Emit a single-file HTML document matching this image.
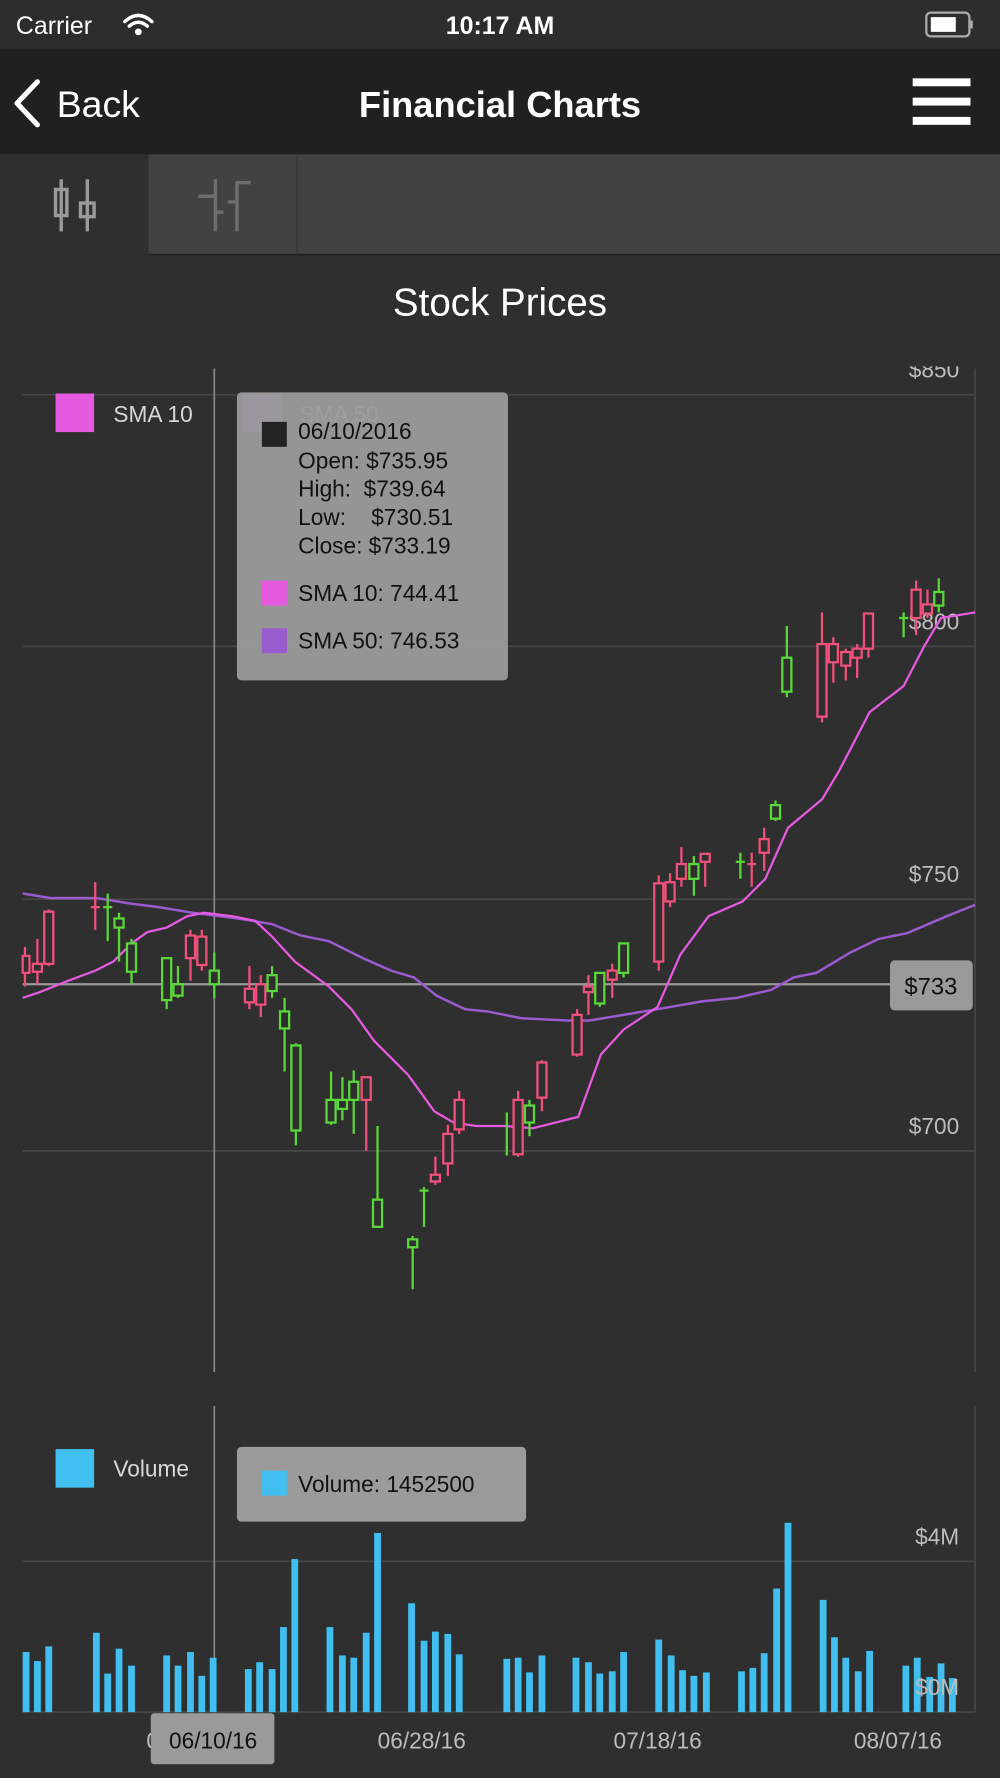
<!DOCTYPE html>
<html><head><meta charset="utf-8"><style>
html,body{margin:0;padding:0;background:#2f2f2f;}
svg{display:block;}
text{font-family:"Liberation Sans",sans-serif;}
</style></head><body>
<svg width="1000" height="1778" viewBox="0 0 882 1568" xmlns="http://www.w3.org/2000/svg">
<defs><clipPath id="cp"><rect x="0" y="323" width="882" height="900"/></clipPath></defs>
<rect x="0" y="0" width="882" height="1568" fill="#2f2f2f"/>
<rect x="0" y="0" width="882" height="43" fill="#2d2d2d"/>
<text x="14" y="30" font-size="22" fill="#fff">Carrier</text>
<g fill="none" stroke="#fff" stroke-width="3" stroke-linecap="round">
<path d="M110 19 Q122 8 134 19"/><path d="M114 23 Q122 16 130 23"/>
</g>
<circle cx="122" cy="28" r="3" fill="#fff"/>
<text x="441" y="30" font-size="22" fill="#fff" text-anchor="middle" font-weight="bold">10:17 AM</text>
<rect x="817" y="11" width="38" height="21" rx="4" fill="none" stroke="#aaa" stroke-width="2"/>
<rect x="821" y="15" width="22" height="13" fill="#fff"/>
<rect x="856" y="18" width="2" height="7" fill="#aaa"/>
<rect x="0" y="43" width="882" height="93" fill="#202020"/>
<path d="M33 72 L15 91 L33 110" fill="none" stroke="#fff" stroke-width="4.5" stroke-linecap="round" stroke-linejoin="round"/>
<text x="50" y="103" font-size="33" fill="#fff">Back</text>
<text x="441" y="103" font-size="32" fill="#fff" text-anchor="middle" font-weight="bold">Financial Charts</text>
<rect x="805" y="69" width="51" height="7" fill="#fff"/>
<rect x="805" y="86" width="51" height="7" fill="#fff"/>
<rect x="805" y="103" width="51" height="7" fill="#fff"/>
<rect x="131" y="136" width="751" height="88" fill="#424242"/>
<line x1="262" y1="136" x2="262" y2="224" stroke="#333" stroke-width="1"/>
<line x1="131" y1="224.5" x2="882" y2="224.5" stroke="#222" stroke-width="1.5"/>
<g stroke="#9a9a9a" stroke-width="3" fill="none">
<line x1="54" y1="158" x2="54" y2="204"/><rect x="49" y="167" width="10" height="23"/>
<line x1="77" y1="158" x2="77" y2="204"/><rect x="71" y="179" width="12" height="12"/>
</g>
<g stroke="#6e6e6e" stroke-width="3" fill="none">
<line x1="190" y1="158" x2="190" y2="204"/><line x1="175" y1="173" x2="190" y2="173"/><line x1="190" y1="187" x2="197" y2="187"/>
<line x1="209" y1="160" x2="209" y2="204"/><line x1="209" y1="161" x2="221" y2="161"/><line x1="201" y1="178" x2="209" y2="178"/>
</g>
<text x="441" y="278" font-size="34" fill="#fff" text-anchor="middle">Stock Prices</text>

<g stroke="#464646" stroke-width="1.5">
<line x1="20" y1="348" x2="860" y2="348"/>
<line x1="20" y1="570" x2="860" y2="570"/>
<line x1="20" y1="793" x2="860" y2="793"/>
<line x1="20" y1="1015" x2="860" y2="1015"/>
<line x1="860" y1="325" x2="860" y2="1210"/>
</g>
<g font-size="20" fill="#bdbdbd" text-anchor="end" clip-path="url(#cp)">
<text x="846" y="333">$850</text>
<text x="846" y="555">$800</text>
<text x="846" y="778">$750</text>
<text x="846" y="1000">$700</text>
</g>
<line x1="189" y1="325" x2="189" y2="1210" stroke="#8a8a8a" stroke-width="1.5"/>
<line x1="20" y1="868" x2="786" y2="868" stroke="#9a9a9a" stroke-width="2"/>

<polyline fill="none" stroke="#9a5ad0" stroke-width="2.2" points="20,788 45,792 85,792 116,797 140,800 170,805 210,810 240,815 265,825 290,830 320,845 345,856 365,862 385,878 410,890 430,892 460,898 500,900 520,900 550,895 580,890 620,883 650,880 680,873 700,862 720,858 750,840 775,828 800,823 835,808 860,798"/>
<polyline fill="none" stroke="#e65ae0" stroke-width="2" points="20,880 35,875 60,865 84,856 100,848 116,832 130,822 147,818 165,808 180,805 205,808 225,812 240,826 260,848 290,870 310,890 330,918 360,948 383,980 400,990 420,993 445,993 470,995 490,990 510,985 530,930 550,908 580,888 600,842 625,808 655,795 675,775 695,730 725,705 740,680 767,628 797,605 815,570 830,545 860,540"/>

<g stroke="#f0507a" stroke-width="2" fill="#2f2f2f">
<line x1="22" y1="835" x2="22" y2="870"/><rect x="20" y="843" width="6" height="15"/>
<line x1="33" y1="828" x2="33" y2="868"/><rect x="29" y="850" width="8" height="7"/>
<line x1="43" y1="802" x2="43" y2="852"/><rect x="39" y="804" width="8" height="46"/>
<line x1="84" y1="778" x2="84" y2="820"/><line x1="80" y1="800" x2="88" y2="800"/>
<line x1="168" y1="820" x2="168" y2="865"/><rect x="164" y="825" width="8" height="20"/>
<line x1="178" y1="820" x2="178" y2="856"/><rect x="174" y="826" width="8" height="25"/>
<line x1="220" y1="852" x2="220" y2="890"/><rect x="216" y="872" width="8" height="12"/>
<line x1="230" y1="860" x2="230" y2="897"/><rect x="226" y="868" width="8" height="18"/>
<line x1="323" y1="950" x2="323" y2="1015"/><rect x="319" y="950" width="8" height="20"/>
<line x1="384" y1="1020" x2="384" y2="1045"/><rect x="380" y="1036" width="8" height="6"/>
<line x1="395" y1="992" x2="395" y2="1037"/><rect x="391" y="1000" width="8" height="26"/>
<line x1="405" y1="962" x2="405" y2="1000"/><rect x="401" y="970" width="8" height="26"/>
<line x1="457" y1="962" x2="457" y2="1020"/><rect x="453" y="970" width="8" height="48"/>
<line x1="478" y1="935" x2="478" y2="980"/><rect x="474" y="937" width="8" height="31"/>
<line x1="509" y1="890" x2="509" y2="932"/><rect x="505" y="895" width="8" height="35"/>
<line x1="519" y1="860" x2="519" y2="895"/><rect x="515" y="870" width="8" height="5"/>
<line x1="540" y1="850" x2="540" y2="880"/><rect x="536" y="856" width="8" height="8"/>
<line x1="581" y1="772" x2="581" y2="856"/><rect x="577" y="779" width="8" height="69"/>
<line x1="591" y1="770" x2="591" y2="800"/><rect x="587" y="778" width="8" height="17"/>
<line x1="601" y1="747" x2="601" y2="782"/><rect x="597" y="762" width="8" height="13"/>
<line x1="622" y1="753" x2="622" y2="782"/><rect x="618" y="753" width="8" height="7"/>
<line x1="674" y1="730" x2="674" y2="768"/><rect x="670" y="740" width="8" height="12"/>
<line x1="663" y1="752" x2="663" y2="782"/><line x1="659" y1="762" x2="667" y2="762"/>
<line x1="725" y1="540" x2="725" y2="637"/><rect x="721" y="568" width="8" height="64"/>
<line x1="735" y1="562" x2="735" y2="602"/><rect x="731" y="568" width="8" height="16"/>
<line x1="746" y1="572" x2="746" y2="600"/><rect x="742" y="575" width="8" height="12"/>
<line x1="756" y1="568" x2="756" y2="598"/><rect x="752" y="572" width="8" height="8"/>
<line x1="766" y1="541" x2="766" y2="580"/><rect x="762" y="541" width="8" height="31"/>
<line x1="808" y1="512" x2="808" y2="560"/><rect x="804" y="520" width="8" height="25"/>
<line x1="818" y1="520" x2="818" y2="545"/><rect x="814" y="533" width="8" height="8"/>
</g>
<g stroke="#5ad83a" stroke-width="2" fill="#2f2f2f">
<line x1="95" y1="788" x2="95" y2="830"/><line x1="91" y1="800" x2="99" y2="800"/>
<line x1="105" y1="805" x2="105" y2="848"/><rect x="101" y="810" width="8" height="8"/>
<line x1="116" y1="828" x2="116" y2="868"/><rect x="112" y="832" width="8" height="25"/>
<line x1="147" y1="845" x2="147" y2="890"/><rect x="143" y="845" width="8" height="37"/>
<line x1="157" y1="852" x2="157" y2="880"/><rect x="153" y="868" width="8" height="10"/>
<line x1="189" y1="840" x2="189" y2="880"/><rect x="185" y="856" width="8" height="12"/>
<line x1="240" y1="852" x2="240" y2="880"/><rect x="236" y="860" width="8" height="14"/>
<line x1="251" y1="880" x2="251" y2="945"/><rect x="247" y="892" width="8" height="15"/>
<line x1="261" y1="920" x2="261" y2="1010"/><rect x="257" y="922" width="8" height="75"/>
<line x1="292" y1="945" x2="292" y2="992"/><rect x="288" y="970" width="8" height="20"/>
<line x1="302" y1="950" x2="302" y2="988"/><rect x="298" y="970" width="8" height="8"/>
<line x1="312" y1="944" x2="312" y2="1000"/><rect x="308" y="954" width="8" height="16"/>
<line x1="333" y1="993" x2="333" y2="1082"/><rect x="329" y="1058" width="8" height="24"/>
<line x1="364" y1="1090" x2="364" y2="1137"/><rect x="360" y="1093" width="8" height="7"/>
<line x1="374" y1="1047" x2="374" y2="1082"/><line x1="370" y1="1050" x2="378" y2="1050"/>
<line x1="447" y1="981" x2="447" y2="1019"/>
<line x1="467" y1="970" x2="467" y2="1002"/><rect x="463" y="975" width="8" height="15"/>
<line x1="529" y1="858" x2="529" y2="888"/><rect x="525" y="858" width="8" height="27"/>
<line x1="550" y1="832" x2="550" y2="862"/><rect x="546" y="832" width="8" height="26"/>
<line x1="612" y1="755" x2="612" y2="790"/><rect x="608" y="762" width="8" height="13"/>
<line x1="653" y1="752" x2="653" y2="775"/><line x1="649" y1="760" x2="657" y2="760"/>
<line x1="684" y1="706" x2="684" y2="724"/><rect x="680" y="710" width="8" height="12"/>
<line x1="694" y1="552" x2="694" y2="615"/><rect x="690" y="580" width="8" height="30"/>
<line x1="797" y1="540" x2="797" y2="562"/><line x1="793" y1="545" x2="801" y2="545"/>
<line x1="828" y1="510" x2="828" y2="540"/><rect x="824" y="522" width="8" height="12"/>
</g>

<rect x="785" y="847" width="73" height="44" rx="4" fill="#9a9a9a"/>
<text x="821" y="877" font-size="21" fill="#111" text-anchor="middle">$733</text>

<rect x="49" y="347" width="34" height="34" fill="#e65ae0"/>
<text x="100" y="372" font-size="20" fill="#d8d8d8">SMA 10</text>
<rect x="214" y="347" width="34" height="34" fill="#9a5ad0"/>
<text x="264" y="372" font-size="20" fill="#d8d8d8">SMA 50</text>

<rect x="209" y="346" width="239" height="254" rx="4" fill="#9b9b9b" fill-opacity="0.95"/>
<rect x="231" y="372" width="22" height="22" fill="#222"/>
<g font-size="20" fill="#111">
<text x="263" y="387">06/10/2016</text>
<text x="263" y="413">Open: $735.95</text>
<text x="263" y="438" xml:space="preserve">High:  $739.64</text>
<text x="263" y="463" xml:space="preserve">Low:    $730.51</text>
<text x="263" y="488">Close: $733.19</text>
<text x="263" y="530">SMA 10: 744.41</text>
<text x="263" y="572">SMA 50: 746.53</text>
</g>
<rect x="231" y="512" width="22" height="22" fill="#e65ae0"/>
<rect x="231" y="554" width="22" height="22" fill="#9a5ad0"/>

<g stroke="#464646" stroke-width="1.5">
<line x1="20" y1="1377" x2="860" y2="1377"/>
<line x1="20" y1="1510" x2="860" y2="1510"/>
<line x1="860" y1="1240" x2="860" y2="1510"/>
</g>
<line x1="189" y1="1240" x2="189" y2="1510" stroke="#8a8a8a" stroke-width="1.5"/>
<g fill="#40bff0">
<rect x="20" y="1457" width="6" height="53"/><rect x="30" y="1465" width="6" height="45"/><rect x="40" y="1452" width="6" height="58"/>
<rect x="82" y="1440" width="6" height="70"/><rect x="92" y="1476" width="6" height="34"/><rect x="102" y="1454" width="6" height="56"/><rect x="113" y="1469" width="6" height="41"/>
<rect x="144" y="1460" width="6" height="50"/><rect x="154" y="1469" width="6" height="41"/><rect x="165" y="1457" width="6" height="53"/><rect x="175" y="1478" width="6" height="32"/><rect x="185" y="1462" width="6" height="48"/>
<rect x="216" y="1472" width="6" height="38"/><rect x="226" y="1466" width="6" height="44"/><rect x="237" y="1472" width="6" height="38"/><rect x="247" y="1435" width="6" height="75"/><rect x="257" y="1375" width="6" height="135"/>
<rect x="288" y="1435" width="6" height="75"/><rect x="299" y="1460" width="6" height="50"/><rect x="309" y="1462" width="6" height="48"/><rect x="320" y="1440" width="6" height="70"/><rect x="330" y="1352" width="6" height="158"/>
<rect x="360" y="1414" width="6" height="96"/><rect x="371" y="1447" width="6" height="63"/><rect x="381" y="1439" width="6" height="71"/><rect x="392" y="1441" width="6" height="69"/><rect x="402" y="1459" width="6" height="51"/>
<rect x="444" y="1463" width="6" height="47"/><rect x="454" y="1462" width="6" height="48"/><rect x="464" y="1475" width="6" height="35"/><rect x="475" y="1460" width="6" height="50"/>
<rect x="505" y="1462" width="6" height="48"/><rect x="516" y="1466" width="6" height="44"/><rect x="526" y="1476" width="6" height="34"/><rect x="537" y="1474" width="6" height="36"/><rect x="547" y="1457" width="6" height="53"/>
<rect x="578" y="1446" width="6" height="64"/><rect x="589" y="1460" width="6" height="50"/><rect x="599" y="1473" width="6" height="37"/><rect x="609" y="1478" width="6" height="32"/><rect x="620" y="1475" width="6" height="35"/>
<rect x="651" y="1474" width="6" height="36"/><rect x="661" y="1471" width="6" height="39"/><rect x="671" y="1458" width="6" height="52"/><rect x="682" y="1401" width="6" height="109"/><rect x="692" y="1343" width="6" height="167"/>
<rect x="723" y="1411" width="6" height="99"/><rect x="733" y="1444" width="6" height="66"/><rect x="743" y="1462" width="6" height="48"/><rect x="754" y="1474" width="6" height="36"/><rect x="764" y="1456" width="6" height="54"/>
<rect x="796" y="1469" width="6" height="41"/><rect x="806" y="1462" width="6" height="48"/><rect x="817" y="1479" width="6" height="31"/><rect x="827" y="1467" width="6" height="43"/><rect x="837" y="1480" width="6" height="30"/>
</g>
<g font-size="20" fill="#bdbdbd" text-anchor="end">
<text x="846" y="1362">$4M</text>
<text x="846" y="1495">$0M</text>
</g>
<rect x="49" y="1278" width="34" height="34" fill="#40bff0"/>
<text x="100" y="1302" font-size="20" fill="#d8d8d8">Volume</text>
<rect x="209" y="1276" width="255" height="66" rx="4" fill="#9b9b9b"/>
<rect x="231" y="1297" width="22" height="22" fill="#40bff0"/>
<text x="263" y="1316" font-size="20" fill="#111">Volume: 1452500</text>

<g font-size="20" fill="#bdbdbd" text-anchor="middle">
<text x="168" y="1542">06/08/16</text>
<text x="372" y="1542">06/28/16</text>
<text x="580" y="1542">07/18/16</text>
<text x="792" y="1542">08/07/16</text>
</g>
<rect x="133" y="1511" width="109" height="45" rx="3" fill="#9a9a9a"/>
<text x="188" y="1542" font-size="20" fill="#111" text-anchor="middle">06/10/16</text>
</svg>
</body></html>
